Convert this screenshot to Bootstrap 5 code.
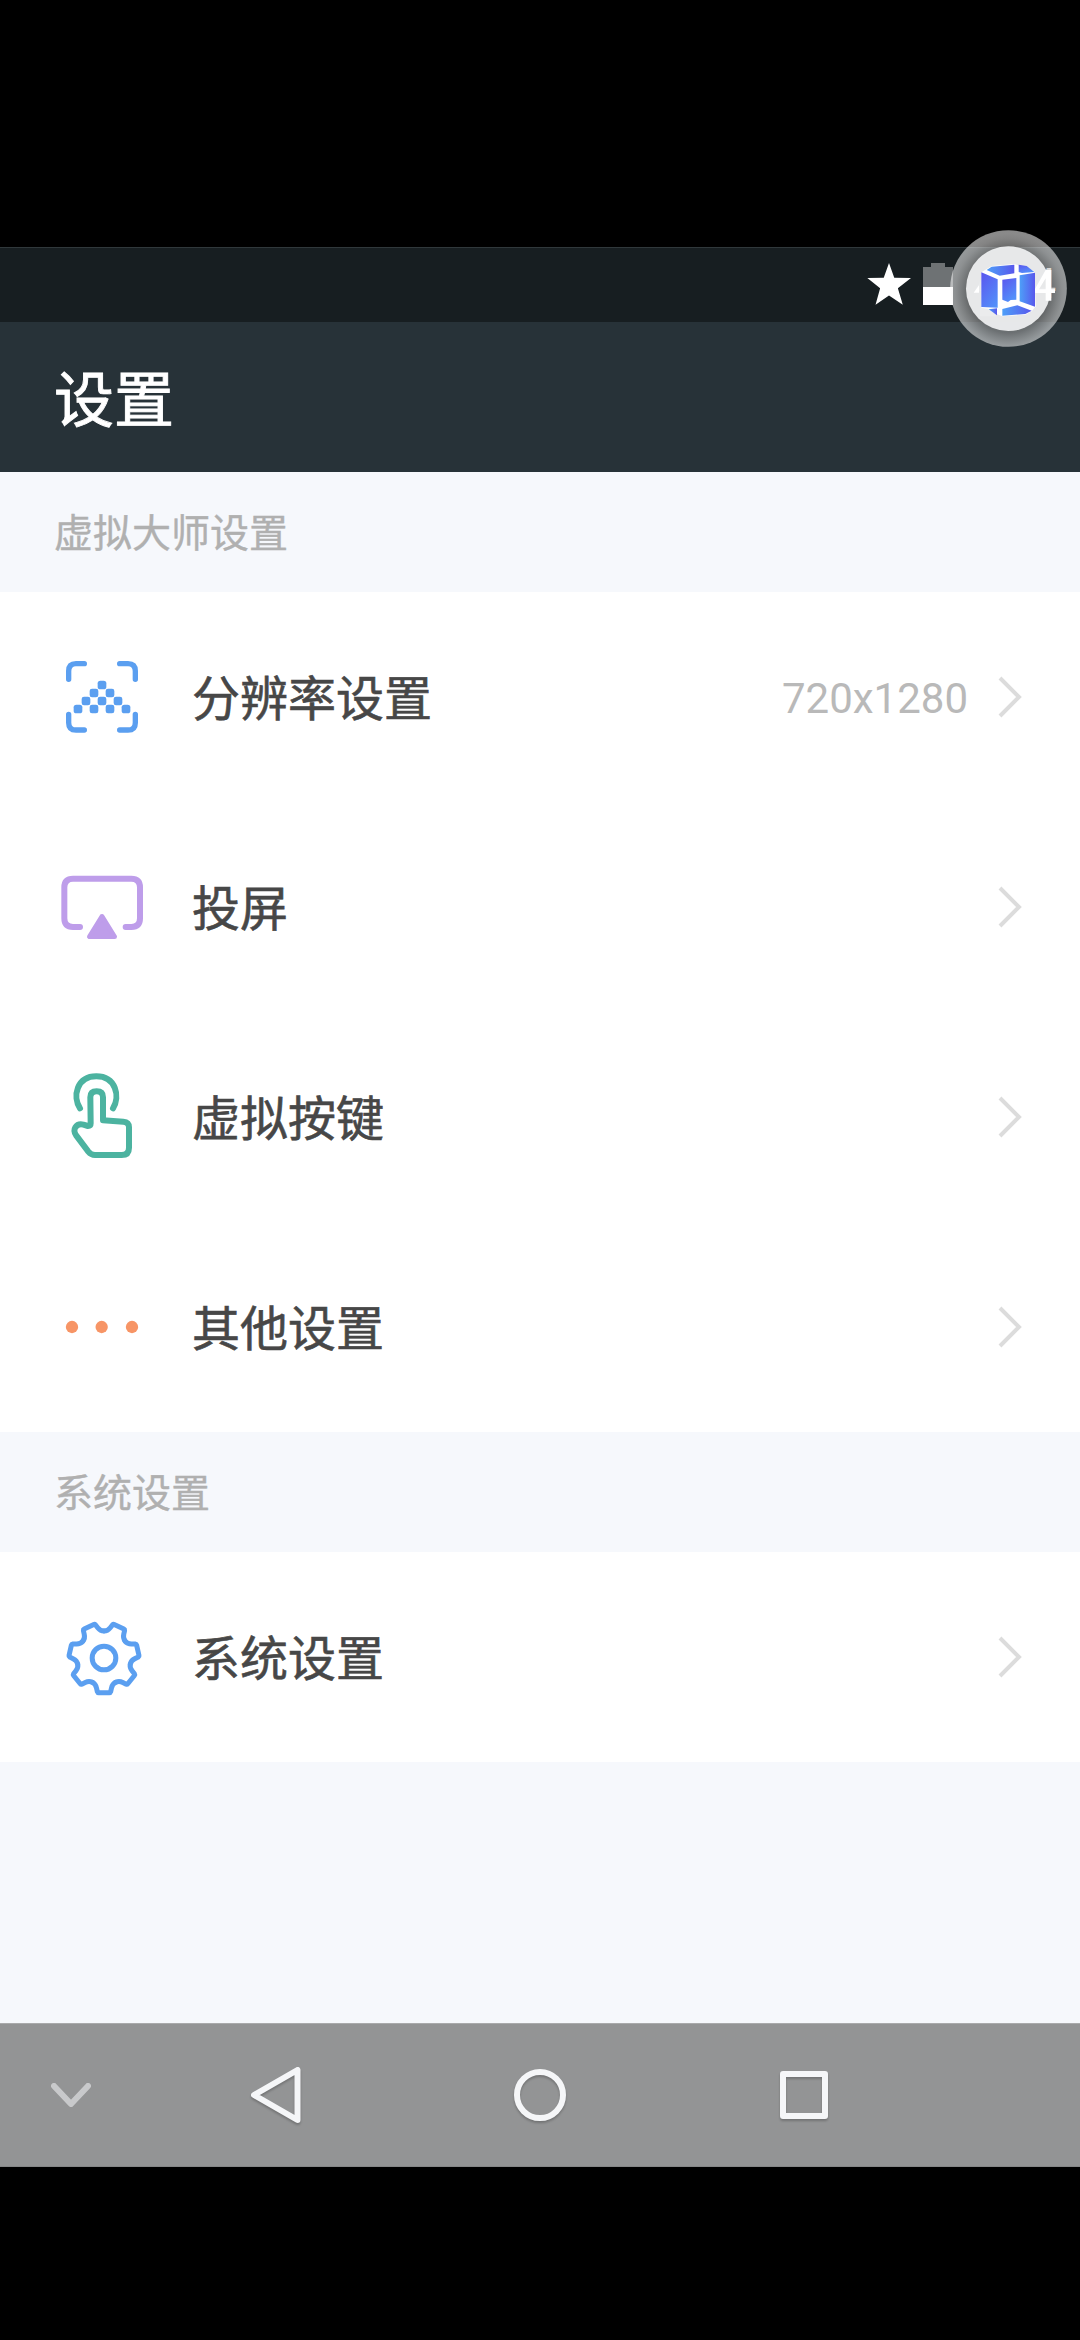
<!DOCTYPE html>
<html lang="zh-CN">
<head>
<meta charset="utf-8">
<meta name="viewport" content="width=device-width, initial-scale=1">
<title>设置</title>
<link href="https://cdn.jsdelivr.net/npm/bootstrap@5.3.0/dist/css/bootstrap.min.css" rel="stylesheet">
<style>
  body { background: #000; font-family: Roboto, "Noto Sans CJK SC", sans-serif; width: 1080px; height: 2340px; overflow: hidden; }
  .letterbox-top { height: 247px; }
  .device { height: 1920px; background: #f6f8fc; }
  .status-strip { height: 75px; background: #171e21; border-top: 1px solid #30383b; padding: 0 24px 2px 0; font-size: 42px; line-height: 1; color: #fff; }
  .status-time { margin-left: 20px; }
  .title-bar { height: 150px; background: #273238; padding: 9px 0 0 54px; color: #fff; }
  .title-bar h1 { font-size: 60px; font-weight: 400; line-height: 1; -webkit-text-stroke: .9px #fff; }
  .section-label { height: 120px; padding: 4px 0 0 54px; font-size: 39px; font-weight: 400; line-height: 1; color: #b0b0b0; background: #f6f8fc; -webkit-text-stroke: .4px #b0b0b0; }
  .setting-row { height: 210px; padding: 0 56px 0 54px; border: 0; background: #fff; color: #474747; font-size: 48px; line-height: 1; }
  .setting-row .row-icon { width: 96px; height: 96px; margin-right: 42px; flex: none; }
  .row-text { padding-top: 5px; -webkit-text-stroke: .6px #474747; }
  .setting-value { font-size: 42px; color: #b9b9b9; margin-right: 30px; padding-top: 3px; }
  .chev { width: 26px; height: 42px; fill: none; stroke: #dcdcdc; stroke-width: 4; }
  .nav-strip { height: 144px; background: #939495; border-top: 1px solid #a9aaab; border-bottom: 1px solid #858687; }
  .nav-collapse { width: 142px; margin-right: 2px; }
  .nav-key { width: 264px; }
  .nav-key svg { filter: drop-shadow(0 2px 1px rgba(0,0,0,.22)); }
  .nav-strip svg { fill: none; stroke: #f5f6f8; stroke-width: 6; stroke-linecap: round; stroke-linejoin: round; }
  .float-ball { left: 950px; top: 230px; width: 117px; height: 117px; }
</style>
</head>
<body class="position-relative">
<div class="letterbox-top"></div>
<main class="device d-flex flex-column">
  <div class="status-strip d-flex align-items-center justify-content-end">
    <svg width="44" height="44" viewBox="81 126 134 130" fill="#fff"><path d="M148 127 164 172 215 173 175 204 190 254 148 226 107 254 121 204 82 173 132 172Z"/></svg>
    <svg class="ms-2 ps-1" width="36" height="44" viewBox="0 0 32 44"><path fill="#6e7274" d="M0 5H8V1H22V5H30V26H0Z"/><path fill="#fff" d="M0 25H30V43H0Z"/></svg>
    <span class="status-time">4:14</span>
  </div>
  <header class="title-bar d-flex align-items-center"><h1 class="m-0">设置</h1></header>

  <h2 class="section-label d-flex align-items-center m-0">虚拟大师设置</h2>
  <div class="list-group list-group-flush">
    <a class="list-group-item setting-row d-flex align-items-center">
      <svg class="row-icon" viewBox="42 27 288 288" fill="#5b9ff0">
        <path fill="none" stroke="#5b9ff0" stroke-width="16" stroke-linecap="round" d="M86 118V93Q86 71 108 71H133M239 71H264Q286 71 286 93V118M86 223V248Q86 270 108 270H133M239 270H264Q286 270 286 248V223"/>
        <rect x="173" y="122" width="26" height="26" rx="8"/>
        <rect x="149" y="146" width="26" height="26" rx="7"/><rect x="197" y="146" width="26" height="26" rx="7"/>
        <rect x="125" y="170" width="26" height="26" rx="7"/><rect x="173" y="170" width="26" height="26" rx="7"/><rect x="221" y="170" width="26" height="26" rx="7"/>
        <rect x="101" y="194" width="26" height="26" rx="8"/><rect x="149" y="194" width="26" height="26" rx="7"/><rect x="197" y="194" width="26" height="26" rx="7"/><rect x="245" y="194" width="26" height="26" rx="8"/>
      </svg>
      <span class="row-text">分辨率设置</span>
      <span class="setting-value ms-auto">720x1280</span>
      <svg class="chev" viewBox="0 0 26 42"><path d="M2 2 21 21 2 40"/></svg>
    </a>
    <a class="list-group-item setting-row d-flex align-items-center">
      <svg class="row-icon" viewBox="42 57 288 288">
        <path fill="none" stroke="#be9dea" stroke-width="18" stroke-linecap="round" d="M120 261H99Q73 261 73 235V142Q73 116 99 116H274Q300 116 300 142V235Q300 261 274 261H257"/>
        <path fill="#be9dea" stroke="#be9dea" stroke-width="14" stroke-linejoin="round" d="M186 229 148 290H224Z"/>
      </svg>
      <span class="row-text">投屏</span>
      <svg class="chev ms-auto" viewBox="0 0 26 42"><path d="M2 2 21 21 2 40"/></svg>
    </a>
    <a class="list-group-item setting-row d-flex align-items-center">
      <svg class="row-icon" viewBox="42 57 288 288" fill="none" stroke="#4cb3a0" stroke-width="18" stroke-linecap="round" stroke-linejoin="round">
        <path d="M120 175C97 140 110 79 169 79S241 140 219 175"/>
        <path d="M151 142Q151 124 170 124T189 142V211L250 215Q267 216 267 232V293Q267 315 245 315H165Q153 315 145 305L109 257Q99 243 106 232Q114 220 130 224L144 228Q152 228 152 220Z"/>
      </svg>
      <span class="row-text">虚拟按键</span>
      <svg class="chev ms-auto" viewBox="0 0 26 42"><path d="M2 2 21 21 2 40"/></svg>
    </a>
    <a class="list-group-item setting-row d-flex align-items-center">
      <svg class="row-icon" viewBox="42 27 288 288" fill="#f79566"><circle cx="96" cy="171" r="18.500"/><circle cx="185" cy="171" r="18.500"/><circle cx="276" cy="171" r="18.500"/></svg>
      <span class="row-text">其他设置</span>
      <svg class="chev ms-auto" viewBox="0 0 26 42"><path d="M2 2 21 21 2 40"/></svg>
    </a>
  </div>

  <h2 class="section-label d-flex align-items-center m-0">系统设置</h2>
  <div class="list-group list-group-flush">
    <a class="list-group-item setting-row d-flex align-items-center">
      <svg class="row-icon" viewBox="42 57 288 288">
        <defs><path id="tooth" d="M-35.100 73Q-25 78 -22.500 90L-20 101Q-19 104 -16 104H16Q19 104 20 101L22.500 90Q25 78 35.100 73"/></defs>
        <g transform="translate(192 204)" fill="none" stroke="#5b9ff0" stroke-width="15" stroke-linecap="round" stroke-linejoin="round">
          <circle r="35.500"/>
          <use href="#tooth"/><use href="#tooth" transform="rotate(51.4286)"/><use href="#tooth" transform="rotate(102.857)"/><use href="#tooth" transform="rotate(154.286)"/><use href="#tooth" transform="rotate(205.714)"/><use href="#tooth" transform="rotate(257.143)"/><use href="#tooth" transform="rotate(308.571)"/>
        </g>
      </svg>
      <span class="row-text">系统设置</span>
      <svg class="chev ms-auto" viewBox="0 0 26 42"><path d="M2 2 21 21 2 40"/></svg>
    </a>
  </div>

  <nav class="nav-strip d-flex align-items-center mt-auto">
    <div class="nav-collapse d-flex justify-content-center"><svg width="42" height="28" viewBox="0 0 42 28" opacity=".55"><path d="M4 5 21 23 38 5"/></svg></div>
    <div class="nav-key d-flex justify-content-center"><svg width="60" height="60" viewBox="0 0 60 60"><path d="M8 30 51.500 5V55Z"/></svg></div>
    <div class="nav-key d-flex justify-content-center"><svg width="60" height="60" viewBox="0 0 60 60"><circle cx="30" cy="30" r="23"/></svg></div>
    <div class="nav-key d-flex justify-content-center"><svg width="60" height="60" viewBox="0 0 60 60"><path d="M9 9H51V51H9Z"/></svg></div>
  </nav>
</main>

<!-- floating assistant ball that hovers over the status bar -->
<svg class="float-ball position-absolute" viewBox="330 31 351 351">
  <defs>
    <radialGradient id="halo" cx=".5" cy=".53" r=".5">
      <stop offset=".7" stop-color="#999" stop-opacity=".6"/><stop offset=".92" stop-color="#eee" stop-opacity=".55"/><stop offset="1" stop-color="#fff" stop-opacity=".54"/>
    </radialGradient>
    <linearGradient id="face" x1="0" y1="0" x2=".5" y2="1"><stop offset="0" stop-color="#5a55ee"/><stop offset="1" stop-color="#5390fa"/></linearGradient>
    <linearGradient id="edge" x1="0" y1="0" x2="1" y2="0"><stop offset="0" stop-color="#4e9ff8"/><stop offset="1" stop-color="#5858ec"/></linearGradient>
  </defs>
  <circle cx="505.500" cy="206.500" r="175" fill="url(#halo)"/>
  <circle cx="505" cy="207" r="127" fill="#ebeced" fill-opacity=".97"/>
  <path fill="#fff" d="M401 219 417 197V219Z"/>
  <path fill="#fff" fill-rule="evenodd" d="M617 151H634V209H645V220H634V243H617V220H585V208ZM617 176 597 209H617Z"/>
  <path fill="#fff" d="M424 158 455 139 523 133 583 154 587 260 575 275 556 285 487 290 424 264Z"/>
  <path fill="#ebeced" d="M420 264 444 267 471 290H420Z"/>
  <path fill="url(#face)" d="M424 158 473 179V285V264L424 262Z"/>
  <path fill="url(#edge)" d="M440 151 455 141 523 135V161L479 168Z"/>
  <path fill="url(#face)" d="M536 135 560 139 583 157 546 160 536 157Z"/>
  <path fill="url(#edge)" d="M539 167 585 159V261L539 245Z"/>
  <path fill="url(#face)" d="M487 180 529 175V240L512 241 504 247 487 240Z"/>
  <path fill="url(#edge)" d="M487 268 532 257 575 273 556 283 487 288Z"/>
  <path fill="url(#edge)" d="M446 269 471 266V287Z"/>
</svg>
<script src="https://cdn.jsdelivr.net/npm/bootstrap@5.3.0/dist/js/bootstrap.bundle.min.js"></script>
</body>
</html>
